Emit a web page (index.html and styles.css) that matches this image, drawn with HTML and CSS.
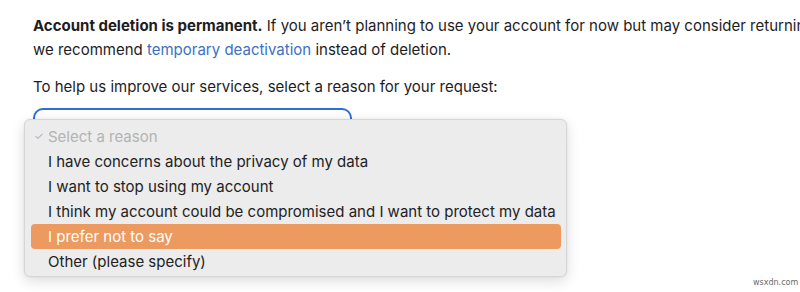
FILE: index.html
```html
<!DOCTYPE html>
<html>
<head>
<meta charset="utf-8">
<link rel="stylesheet" href="styles.css">
</head>
<body>
<div class="page">
  <p class="intro"><strong>Account deletion is permanent.</strong> If you aren’t planning to use your account for now but may consider returning later,<br>we recommend <a class="link" href="#">temporary deactivation</a> instead of deletion.</p>
  <p class="prompt">To help us improve our services, select a reason for your request:</p>
  <div class="select-wrap">
    <div class="select"></div>
    <ul class="menu">
      <li class="item placeholder"><span class="check">✓</span>Select a reason</li>
      <li class="item">I have concerns about the privacy of my data</li>
      <li class="item">I want to stop using my account</li>
      <li class="item">I think my account could be compromised and I want to protect my data</li>
      <li class="item active">I prefer not to say</li>
      <li class="item">Other (please specify)</li>
    </ul>
  </div>
</div>
<div class="watermark">wsxdn.com</div>
</body>
</html>
```
FILE: styles.css
```css
html, body {
  margin: 0;
  padding: 0;
  background: #ffffff;
  width: 800px;
  height: 292px;
  overflow: hidden;
}
body {
  font-family: Inter, "Liberation Sans", sans-serif;
  color: #1d1d1f;
  position: relative;
}
.page {
  padding: 14px 0 0 33px;
  white-space: nowrap;
}
.intro {
  margin: 0;
  font-size: 15px;
  line-height: 24px;
}
.intro strong {
  font-weight: 650;
}
.link {
  color: #3b70c4;
  text-decoration: none;
}
.prompt {
  margin: 13px 0 0 0;
  font-size: 15px;
  line-height: 24px;
}
.select-wrap {
  position: relative;
  margin-top: 9px;
  height: 170px;
}
.select {
  width: 319px;
  height: 36px;
  border: 2px solid #2f6fd0;
  border-radius: 10px;
  box-sizing: border-box;
}
.menu {
  position: absolute;
  left: -9px;
  top: 11px;
  width: 543px;
  height: 158px;
  box-sizing: border-box;
  margin: 0;
  padding: 4px 5px 4px 6px;
  list-style: none;
  background: #ececec;
  border: 1px solid #d6d6d6;
  border-radius: 6px;
  box-shadow: 0 4px 14px rgba(0, 0, 0, 0.14), 0 0 2px rgba(0, 0, 0, 0.08);
}
.item {
  position: relative;
  height: 25px;
  line-height: 25px;
  padding-left: 17px;
  font-size: 15px;
  color: #222222;
  border-radius: 4px;
}
.placeholder {
  color: #b3b3b3;
}
.check {
  position: absolute;
  left: 3px;
  top: 0;
  font-size: 11px;
  color: #b3b3b3;
}
.active {
  background: #ec9a5f;
  color: #ffffff;
}
.watermark {
  position: absolute;
  left: 753px;
  top: 278px;
  font-family: "DejaVu Sans", sans-serif;
  font-size: 8px;
  color: #6a6a6a;
}
```
